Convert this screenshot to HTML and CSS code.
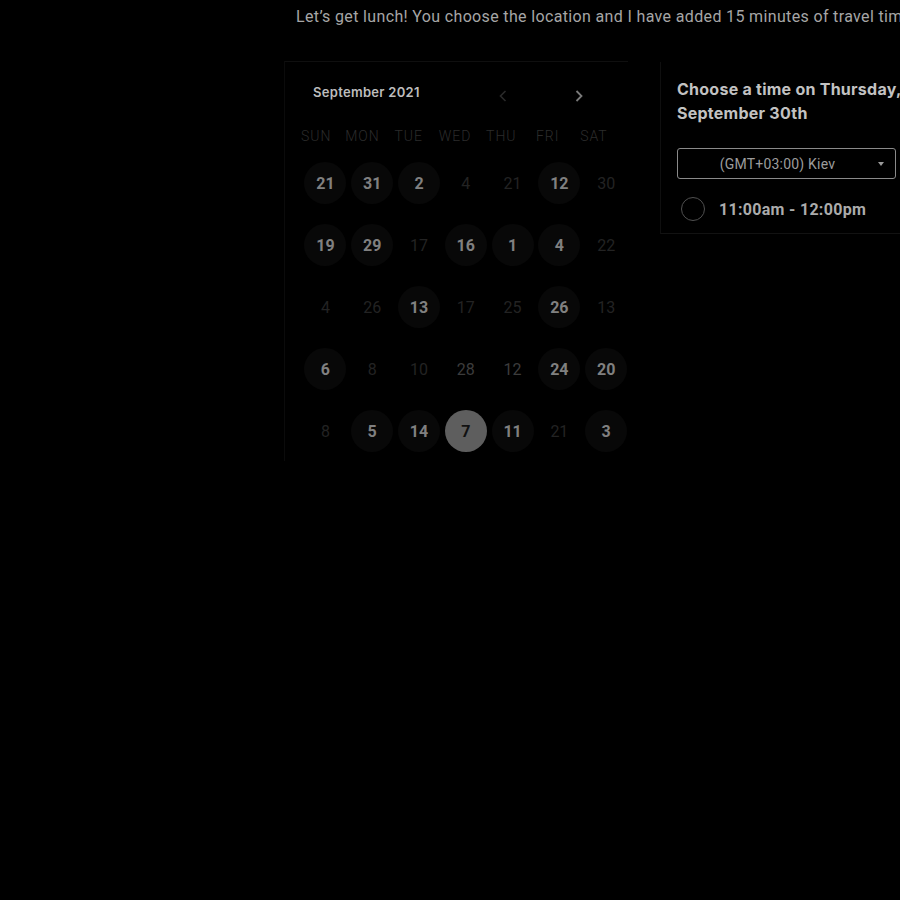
FILE: index.html
```html
<!DOCTYPE html>
<html lang="en">
<head>
<meta charset="utf-8">
<title>Schedule lunch</title>
<link rel="stylesheet" href="styles.css">
</head>
<body>
<div class="page">
  <p class="intro">Let’s get lunch! You choose the location and I have added 15 minutes of travel time on both sides of the meeting.</p>
  <div class="main">
    <section class="calendar">
      <div class="cal-head">
        <span class="month">September 2021</span>
        <div class="nav">
          <svg class="arrow dim" width="8" height="12" viewBox="0 0 8 12"><path d="M6.5 1 L1.5 6 L6.5 11" fill="none" stroke="currentColor" stroke-width="1.6"/></svg>
          <svg class="arrow" width="8" height="12" viewBox="0 0 8 12"><path d="M1.5 1 L6.5 6 L1.5 11" fill="none" stroke="currentColor" stroke-width="1.8"/></svg>
        </div>
      </div>
      <div class="dows">
        <span>SUN</span><span>MON</span><span>TUE</span><span>WED</span><span>THU</span><span>FRI</span><span>SAT</span>
      </div>
      <div class="dates">
        <span class="d av">21</span><span class="d av">31</span><span class="d av">2</span><span class="d">4</span><span class="d">21</span><span class="d av">12</span><span class="d">30</span>
        <span class="d av">19</span><span class="d av">29</span><span class="d">17</span><span class="d av">16</span><span class="d av">1</span><span class="d av">4</span><span class="d">22</span>
        <span class="d">4</span><span class="d">26</span><span class="d av">13</span><span class="d">17</span><span class="d">25</span><span class="d av">26</span><span class="d">13</span>
        <span class="d av">6</span><span class="d">8</span><span class="d">10</span><span class="d mid">28</span><span class="d mid">12</span><span class="d av">24</span><span class="d av">20</span>
        <span class="d">8</span><span class="d av">5</span><span class="d av">14</span><span class="d sel">7</span><span class="d av">11</span><span class="d">21</span><span class="d av">3</span>
      </div>
    </section>
    <section class="times">
      <h2 class="title">Choose a time on Thursday,<br>September 30th</h2>
      <div class="select">
        <span class="select-text">(GMT+03:00) Kiev</span>
        <span class="caret"></span>
      </div>
      <div class="slot">
        <span class="radio"></span>
        <span class="slot-text">11:00am - 12:00pm</span>
      </div>
    </section>
  </div>
</div>
</body>
</html>
```
FILE: styles.css
```css
html, body {
  margin: 0;
  padding: 0;
  background: #000;
  overflow: hidden;
}
body {
  font-family: Roboto, "Liberation Sans", Arial, sans-serif;
  width: 900px;
  height: 900px;
}
.page {
  padding-left: 284px;
  padding-top: 7px;
  width: 1000px;
}
.intro {
  margin: 0 0 0 12px;
  font-size: 16px;
  line-height: 20px;
  color: #a6a6a6;
  white-space: nowrap;
  letter-spacing: 0.35px;
}
.main {
  display: flex;
  gap: 32px;
  margin-top: 34px;
  align-items: flex-start;
}
.calendar {
  box-sizing: border-box;
  width: 344px;
  height: 400px;
  border-top: 1px solid #0f0f0f;
  border-left: 1px solid #0b0b0b;
  padding-top: 20px;
}
.cal-head {
  display: flex;
  align-items: center;
  height: 20px;
}
.month {
  margin-left: 28px;
  font-family: Inter, "Liberation Sans", sans-serif;
  font-weight: 600;
  font-size: 13px;
  letter-spacing: 0.3px;
  color: #bdbdbd;
  width: 186px;
}
.nav {
  display: flex;
  gap: 68px;
  margin-top: 8px;
}
.arrow { color: #7a7a7a; display: block; }
.arrow.dim { color: #2a2a2a; }
.dows {
  display: grid;
  grid-template-columns: repeat(7, 46.3px);
  margin: 24px 0 0 8px;
  height: 20px;
  line-height: 20px;
}
.dows span {
  text-align: center;
  font-size: 14px;
  font-weight: 300;
  letter-spacing: 1px;
  color: #2c2c2c;
}
.dates {
  display: grid;
  grid-template-columns: repeat(7, 46.8px);
  row-gap: 20px;
  margin: 16px 0 0 17px;
}
.d {
  justify-self: center;
  width: 42px;
  height: 42px;
  border-radius: 50%;
  display: flex;
  align-items: center;
  justify-content: center;
  font-size: 16px;
  color: #232323;
}
.d.mid { color: #3c3c3c; }
.d.av {
  background: #080808;
  color: #808080;
  font-weight: 700;
}
.d.sel {
  background: #5e5e5e;
  color: #111;
  font-weight: 700;
}
.times {
  box-sizing: border-box;
  width: 280px;
  margin-top: 1px;
  border-left: 1px solid #0f0f0f;
  border-bottom: 1px solid #121212;
  padding: 15px 0 12px 16px;
}
.title {
  margin: 0;
  font-family: Inter, "Liberation Sans", sans-serif;
  font-size: 16px;
  font-weight: 700;
  line-height: 24px;
  color: #c2c2c2;
  white-space: nowrap;
  letter-spacing: 0.25px;
}
.select {
  margin-top: 23px;
  box-sizing: border-box;
  width: 219px;
  height: 31px;
  border: 1px solid #8a8a8a;
  border-radius: 3px;
  display: flex;
  align-items: center;
  position: relative;
}
.select-text {
  flex: 1;
  text-align: center;
  padding-right: 18px;
  font-size: 14px;
  letter-spacing: 0.2px;
  color: #9c9c9c;
}
.caret {
  position: absolute;
  right: 11px;
  top: 13px;
  width: 0;
  height: 0;
  border-left: 3.5px solid transparent;
  border-right: 3.5px solid transparent;
  border-top: 4px solid #9a9a9a;
}
.slot {
  display: flex;
  align-items: center;
  margin-top: 18px;
  gap: 14px;
  margin-left: 4px;
}
.radio {
  box-sizing: border-box;
  width: 24px;
  height: 24px;
  border-radius: 50%;
  border: 1.5px solid #505050;
}
.slot-text {
  font-size: 16px;
  font-weight: 700;
  color: #ababab;
  letter-spacing: 0.3px;
}
```
